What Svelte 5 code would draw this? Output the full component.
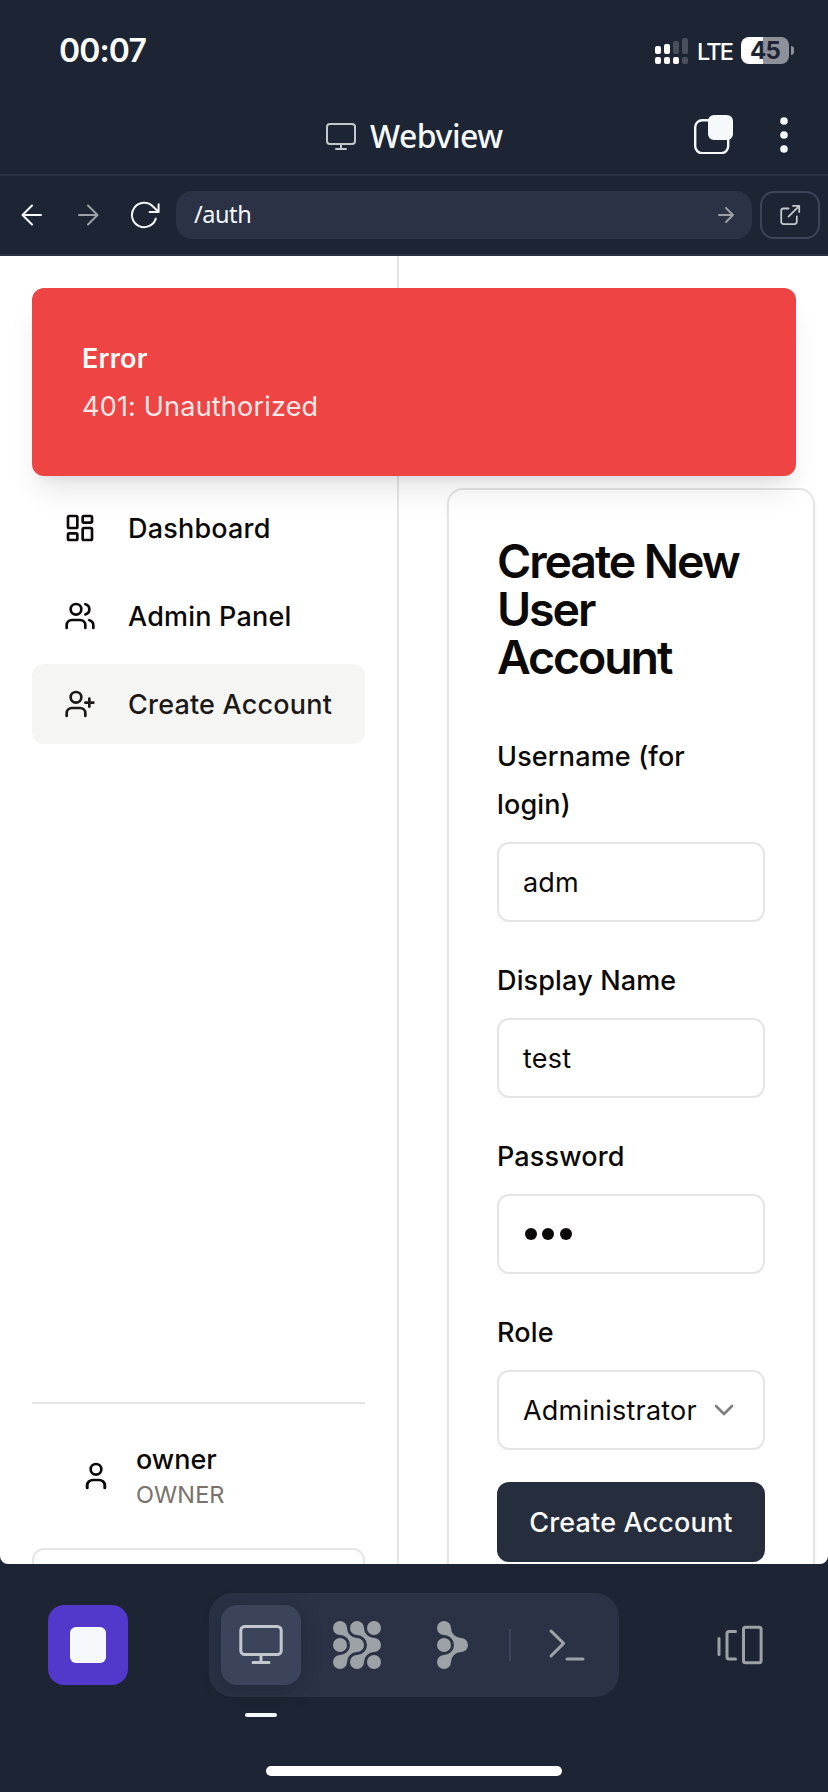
<script>
  const fields = [
    { label: 'Username (for login)', value: 'adm', cls: 'wrap' },
    { label: 'Display Name', value: 'test', cls: '' },
    { label: 'Password', value: 3, cls: '' }
  ];
  const bars = [
    { h: 8, on: true, dot: true },
    { h: 10, on: true, dot: true },
    { h: 13, on: false, dot: true },
    { h: 16, on: false, dot: false }
  ];
</script>

<div class="screen">
  <div class="status">
    <span class="time">00:07</span>
    <div class="indicators">
      <div class="signal">
        {#each bars as b}
          <div class="col">
            <i class:off={!b.on} style="height:{b.h}px"></i>
            <i class="base" class:off={!b.dot}></i>
          </div>
        {/each}
      </div>
      <span class="lte">LTE</span>
      <div class="battery"><span>45</span></div>
      <div class="nub"></div>
    </div>
  </div>

  <header>
    <div class="title">
      <svg width="32" height="32" viewBox="0 0 32 32" fill="none" stroke="#c2c8cc" stroke-width="2" stroke-linecap="round">
        <rect x="3" y="5" width="28" height="20" rx="3" />
        <path d="M17 25v5M12 30h10" />
      </svg>
      <span>Webview</span>
    </div>
    <svg class="tabs" width="42" height="42" viewBox="0 0 42 42">
      <rect x="4.2" y="8.2" width="33" height="33" rx="7" fill="none" stroke="#f5f9fc" stroke-width="2.4" />
      <rect x="17" y="3" width="25" height="25" rx="6" fill="#f5f9fc" />
    </svg>
    <svg class="dots" width="10" height="40" viewBox="0 0 10 40" fill="#f5f9fc">
      <circle cx="5" cy="6" r="3.8" /><circle cx="5" cy="20" r="3.8" /><circle cx="5" cy="34" r="3.8" />
    </svg>
  </header>

  <div class="toolbar">
    <svg class="back" width="32" height="32" viewBox="0 0 32 32" fill="none" stroke="#f5f9fc" stroke-width="2" stroke-linecap="round" stroke-linejoin="round">
      <path d="M25 16H7M16 6.5L6.5 16l9.5 9.5" />
    </svg>
    <svg class="fwd" width="32" height="32" viewBox="0 0 32 32" fill="none" stroke="#9da2a6" stroke-width="2" stroke-linecap="round" stroke-linejoin="round">
      <path d="M7 16h18M16 6.5l9.5 9.5-9.5 9.5" />
    </svg>
    <svg class="reload" width="32" height="32" viewBox="0 0 32 32" fill="none" stroke="#f5f9fc" stroke-width="2" stroke-linecap="round" stroke-linejoin="round">
      <path d="M27.800 19.600A12.200 12.200 0 1 1 25 7.500L30.600 13M30.600 5.200V13h-9" />
    </svg>
    <div class="url">
      <span>/auth</span>
      <svg width="24" height="24" viewBox="0 0 24 24" fill="none" stroke="#9da2a6" stroke-width="1.8" stroke-linecap="round" stroke-linejoin="round">
        <path d="M5 12h14M12 5l7 7-7 7" />
      </svg>
    </div>
    <div class="open">
      <svg width="24" height="24" viewBox="0 0 24 24" fill="none" stroke="#c2c8cc" stroke-width="1.8" stroke-linecap="round" stroke-linejoin="round">
        <path d="M10.500 5.500H5.500a2.300 2.300 0 0 0-2.300 2.300v11a2.300 2.300 0 0 0 2.300 2.300h11a2.300 2.300 0 0 0 2.300-2.300v-5.300M15 2.900h6.200v6.200M21 3.100L10.500 13.600" />
      </svg>
    </div>
  </div>

  <main>
    <aside>
      <nav>
        <div class="item">
          <svg class="lu" viewBox="0 0 24 24"><rect x="3" y="3" width="7" height="9" rx="1" /><rect x="14" y="3" width="7" height="5" rx="1" /><rect x="14" y="12" width="7" height="9" rx="1" /><rect x="3" y="16" width="7" height="5" rx="1" /></svg>
          <span>Dashboard</span>
        </div>
        <div class="item">
          <svg class="lu" viewBox="0 0 24 24"><path d="M16 21v-2a4 4 0 0 0-4-4H6a4 4 0 0 0-4 4v2" /><circle cx="9" cy="7" r="4" /><path d="M22 21v-2a4 4 0 0 0-3-3.870M16 3.130a4 4 0 0 1 0 7.750" /></svg>
          <span>Admin Panel</span>
        </div>
        <div class="item active">
          <svg class="lu" viewBox="0 0 24 24"><path d="M16 21v-2a4 4 0 0 0-4-4H6a4 4 0 0 0-4 4v2" /><circle cx="9" cy="7" r="4" /><path d="M19 8v6M22 11h-6" /></svg>
          <span>Create Account</span>
        </div>
      </nav>
      <div class="account">
        <div class="who">
          <svg class="lu" viewBox="0 0 24 24"><path d="M18 21v-2a4 4 0 0 0-4-4h-4a4 4 0 0 0-4 4v2" transform="translate(-1.200 0) scale(1.100 1)" /><circle cx="12" cy="7" r="4" /></svg>
          <div>
            <div class="name">owner</div>
            <div class="role">OWNER</div>
          </div>
        </div>
        <div class="logout"></div>
      </div>
    </aside>

    <section>
      <div class="card">
        <h1>Create New<br />User<br />Account</h1>
        {#each fields as f}
          <div class="field">
            <div class="label {f.cls}">{f.label}</div>
            <div class="input">
              {#if typeof f.value === 'number'}
                <div class="mask">{#each Array(f.value) as _}<b></b>{/each}</div>
              {:else}
                <span>{f.value}</span>
              {/if}
            </div>
          </div>
        {/each}
        <div class="field">
          <div class="label">Role</div>
          <div class="input select">
            <span>Administrator</span>
            <svg class="lu chev" viewBox="0 0 24 24"><path d="m6 9 6 6 6-6" /></svg>
          </div>
        </div>
        <div class="submit"><span>Create Account</span></div>
      </div>
    </section>

    <div class="toast">
      <div class="tt">Error</div>
      <div class="td">401: Unauthorized</div>
    </div>
  </main>

  <footer>
    <div class="dock">
      <div class="stop"><i></i></div>
      <div class="pill">
        <div class="tab on">
          <svg width="48" height="48" viewBox="0 0 48 48" fill="none" stroke="#c2c8cc" stroke-width="3" stroke-linecap="round">
            <rect x="3.8" y="5.5" width="40.4" height="28" rx="4" />
            <path d="M24 33.500V41M16 41.600h16" />
          </svg>
          <div class="mark"></div>
        </div>
        <div class="tab">
          <svg width="48" height="48" viewBox="0 0 48 48" fill="#9da2a6">
            <circle cx="7" cy="24" r="7" /><circle cx="41" cy="7" r="7" /><circle cx="41" cy="41" r="7" />
            <path d="M7 0A7 7 0 0 1 14 7A10 10 0 0 0 24 17A7 7 0 0 1 24 31A10 10 0 0 0 14 41A7 7 0 1 1 7 34A10 10 0 0 0 7 14A7 7 0 0 1 7 0Z" />
            <path d="M24 0A7 7 0 0 1 31 7A10 10 0 0 0 41 17A7 7 0 0 1 41 31A10 10 0 0 0 31 41A7 7 0 1 1 24 34A10 10 0 0 0 24 14A7 7 0 0 1 24 0Z" />
          </svg>
        </div>
        <div class="tab">
          <svg width="48" height="48" viewBox="-8 0 48 48" fill="#9da2a6">
            <circle cx="7" cy="24" r="7" />
            <path d="M7 0A7 7 0 0 1 14 7A10 10 0 0 0 24 17A7 7 0 0 1 24 31A10 10 0 0 0 14 41A7 7 0 1 1 7 34A10 10 0 0 0 7 14A7 7 0 0 1 7 0Z" />
          </svg>
        </div>
        <div class="divider"></div>
        <div class="tab">
          <svg width="48" height="48" viewBox="0 0 48 48" fill="none" stroke="#9da2a6" stroke-width="3" stroke-linecap="round" stroke-linejoin="round">
            <path d="M8 10l12.600 12.400L8 35M24 38h16" />
          </svg>
        </div>
      </div>
      <svg class="stack" width="48" height="48" viewBox="0 0 48 48" fill="none" stroke="#9da2a6" stroke-width="3" stroke-linecap="round" stroke-linejoin="round">
        <rect x="27.500" y="6.200" width="17.600" height="35.600" rx="2" />
        <path d="M19.500 10.500H13a2 2 0 0 0-2 2v23.400a2 2 0 0 0 2 2h6.500M3 17.500v16" />
      </svg>
    </div>
    <div class="home"></div>
  </footer>
</div>

<style>
  :global(body) { margin: 0; background: #1d2433; }
  * { box-sizing: border-box; }
  svg { display: block; flex: none; }
  .screen {
    width: 828px; height: 1792px; overflow: hidden; background: #1d2433;
    display: flex; flex-direction: column;
    font-family: Inter, "Liberation Sans", sans-serif; color: #0c0a09;
  }
  .screen span, .label, h1, .tt, .td, .name, .role { white-space: nowrap; }

  .status { height: 100px; padding: 0 34px 0 59px; display: flex; align-items: center; justify-content: space-between; color: #fff; }
  .time { font-size: 32px; font-weight: 600; letter-spacing: -0.85px; }
  .indicators { display: flex; align-items: center; }
  .signal { display: flex; gap: 3px; align-items: flex-end; height: 27px; }
  .col { display: flex; flex-direction: column; gap: 3px; width: 6px; }
  .col i { display: block; background: #fff; border-radius: 2px; }
  .col i.base { height: 7px; }
  .col i.off { background: #4a4f5c; }
  .lte { width: 36px; margin: 2px 8px 0 9px; font-size: 23.5px; font-weight: 450; letter-spacing: -1.8px; }
  .battery {
    width: 48px; height: 27px; border-radius: 8px; color: #1d2433;
    background: linear-gradient(90deg, #fff 22px, #8e9199 22px);
    display: flex; align-items: center; justify-content: center;
    font-size: 24px; font-weight: 700; letter-spacing: -0.8px;
  }
  .nub { width: 3px; height: 9px; margin-left: 2px; border-radius: 0 4px 4px 0; background: #8e9199; }

  header { height: 76px; border-bottom: 2px solid #2b3245; display: flex; align-items: center; padding: 0 39px 4px 324px; }
  .title { display: flex; align-items: center; gap: 14px; color: #f5f9fc; font-family: "Noto Sans", sans-serif; font-size: 32px; font-weight: 500; letter-spacing: -0.5px; flex: 1; }
  .title span { line-height: 40px; padding-top: 2px; }
  .tabs { margin-bottom: 4px; }
  .dots { margin-left: 46px; }

  .toolbar { height: 80px; border-bottom: 2px solid #2b3245; display: flex; align-items: center; padding: 0 8px 0 16px; }
  .fwd { margin-left: 24px; }
  .reload { margin-left: 24px; }
  .url {
    flex: 1; margin: 0 8px 0 16px; height: 48px; border-radius: 16px; background: #2b3245;
    display: flex; align-items: center; justify-content: space-between; padding: 0 14px 0 18px;
    font-family: "Noto Sans", sans-serif; font-size: 23.5px; letter-spacing: -0.45px; color: #f5f9fc;
  }
  .url span { padding-bottom: 2px; }
  .open { width: 60px; height: 48px; border: 2px solid #3c445c; border-radius: 14px; display: flex; align-items: center; justify-content: center; }

  main { position: relative; height: 1308px; background: #fff; border-radius: 0 0 8px 8px; overflow: hidden; display: flex; }
  aside { width: 399px; border-right: 2px solid #e5e5e5; padding: 232px 32px 0; display: flex; flex-direction: column; justify-content: space-between; }
  nav { display: flex; flex-direction: column; gap: 8px; }
  .item { height: 80px; padding: 0 32px; display: flex; align-items: center; gap: 32px; border-radius: 12px; font-size: 27px; font-weight: 500; letter-spacing: 0.2px; }
  .active { background: #f5f5f4; color: #1c1917; }
  .lu { width: 32px; height: 32px; fill: none; stroke: currentColor; stroke-width: 2; stroke-linecap: round; stroke-linejoin: round; }

  .account { height: 162px; border-top: 2px solid #e5e5e5; display: flex; flex-direction: column; }
  .who { height: 144px; flex: none; padding-left: 48px; display: flex; align-items: center; gap: 24px; }
  .name { font-size: 27px; font-weight: 500; line-height: 38px; }
  .role { font-size: 23.5px; line-height: 32px; letter-spacing: 0.1px; color: #78716c; }
  .logout { height: 80px; flex: none; border: 2px solid #e5e5e5; border-radius: 12px; }

  section { flex: 1; padding: 232px 13px 0 48px; }
  .card { border: 2px solid #e5e5e5; border-radius: 16px; height: 1200px; padding: 47px 48px; box-shadow: 0 2px 4px rgba(0, 0, 0, 0.05); }
  h1 { margin: 0 0 17px; font-size: 46.5px; line-height: 48px; font-weight: 600; letter-spacing: -2.1px; }
  .field { padding-top: 35px; }
  .label { font-size: 27px; line-height: 48px; font-weight: 500; letter-spacing: 0.15px; margin-bottom: 13px; }
  .label.wrap { white-space: normal; width: 220px; }
  .input { height: 80px; border: 2px solid #e5e5e5; border-radius: 12px; padding: 0 24px; display: flex; align-items: center; font-size: 27px; letter-spacing: 0.2px; }
  .mask { display: flex; gap: 5.3px; padding-left: 2px; }
  .mask b { width: 12px; height: 12px; border-radius: 50%; background: #0c0a09; }
  .select { justify-content: space-between; padding-right: 23px; }
  .chev { color: #808080; }
  .submit { margin-top: 32px; height: 80px; border-radius: 12px; background: #262d3d; color: #fafaf9; display: flex; align-items: center; justify-content: center; font-size: 27px; font-weight: 500; letter-spacing: 0.15px; }

  .toast {
    position: absolute; left: 32px; top: 32px; width: 764px; height: 188px; border-radius: 12px;
    background: #ef4444; color: #fafaf9; padding: 47px 50px;
    box-shadow: 0 20px 30px -6px rgba(0, 0, 0, 0.1), 0 8px 12px -8px rgba(0, 0, 0, 0.1);
  }
  .tt { font-size: 27px; line-height: 48px; font-weight: 600; letter-spacing: 0.2px; }
  .td { font-size: 27px; line-height: 48px; letter-spacing: 0.2px; opacity: 0.9; }

  footer { height: 228px; display: flex; flex-direction: column; align-items: center; padding-top: 29px; }
  .dock { width: 100%; display: flex; align-items: center; padding: 0 64px 0 48px; }
  .stop { width: 80px; height: 80px; border-radius: 16px; background: #5239cc; display: flex; align-items: center; justify-content: center; }
  .stop i { width: 36px; height: 36px; border-radius: 6px; background: #f5f9fc; }
  .pill { width: 410px; height: 104px; margin-left: 81px; border-radius: 24px; background: #2b3245; padding: 12px; display: flex; align-items: center; gap: 16px; }
  .tab { position: relative; width: 80px; height: 80px; border-radius: 16px; display: flex; align-items: center; justify-content: center; }
  .on { background: #3c445c; box-shadow: 0 4px 20px rgba(14, 21, 37, 0.3); }
  .mark { position: absolute; left: 24px; top: 108px; width: 32px; height: 4px; border-radius: 2px; background: #f5f9fc; }
  .divider { width: 2px; height: 32px; background: #3c445c; }
  .stack { margin-left: auto; }
  .home { width: 296px; height: 10px; margin-top: 69px; border-radius: 5px; background: #fff; }
</style>
